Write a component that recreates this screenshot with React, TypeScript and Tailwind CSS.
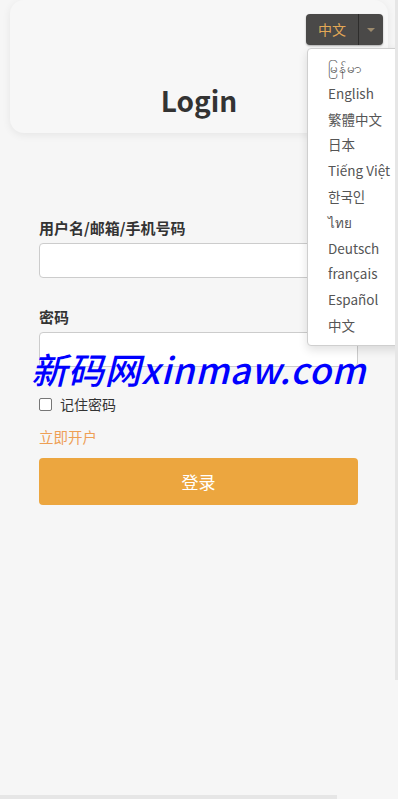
import React from 'react';

const languages = [
  'မြန်မာ',
  'English',
  '繁體中文',
  '日本',
  'Tiếng Việt',
  '한국인',
  'ไทย',
  'Deutsch',
  'français',
  'Español',
  '中文',
];

const font = {
  fontFamily:
    '"Noto Sans CJK SC", "Noto Sans", "Noto Sans CJK KR", "Noto Sans CJK JP", sans-serif',
};

export default function App() {
  return (
    <div className="relative min-h-screen w-full overflow-hidden bg-[#f6f6f6]" style={font}>
      {/* header card */}
      <div className="mx-[10px] flex h-[133px] flex-col rounded-[14px] bg-[#f7f7f7] shadow-[0_2px_8px_rgba(0,0,0,0.07)]">
        <div className="flex justify-end pr-[5px] pt-[14px]">
          <div className="flex h-[31px] overflow-hidden rounded-[4px] bg-[#4a4948] shadow-[0_1px_2px_rgba(0,0,0,0.3)]">
            <button className="w-[52px] text-[14px] text-[#e3a856]">中文</button>
            <div className="w-px bg-[#2e2d2c]" />
            <button className="flex w-[24px] items-center justify-center">
              <span className="block h-0 w-0 border-x-[4px] border-t-[4px] border-x-transparent border-t-[#9c8a6c]" />
            </button>
          </div>
        </div>
        <h1 className="mt-auto pb-[16px] text-center text-[28px] font-bold leading-[34px] text-[#333]">
          Login
        </h1>
      </div>

      {/* language menu */}
      <ul className="absolute left-[307px] top-[48px] w-[110px] rounded-[4px] border border-[#cfcfcf] bg-white py-[6px] shadow-[0_4px_10px_rgba(0,0,0,0.12)]">
        {languages.map((l) => (
          <li key={l} className="pl-[20px] text-[13.5px] leading-[25.8px] text-[#555]">
            {l}
          </li>
        ))}
      </ul>

      {/* form */}
      <div className="px-[39px] pt-[85px]">
        <label className="block text-[15px] font-bold leading-[20px] text-[#333]">用户名/邮箱/手机号码</label>
        <input className="mt-[5px] block h-[35px] w-[319px] rounded-[4px] border border-[#ccc] bg-white px-3 outline-none" />

        <label className="mt-[29px] block text-[15px] font-bold leading-[20px] text-[#333]">密码</label>
        <input
          type="password"
          className="mt-[5px] block h-[35px] w-[319px] rounded-[4px] border border-[#ccc] bg-white px-3 outline-none"
        />

        <div className="mt-[27px] flex items-center gap-[8px]">
          <span className="block h-[13px] w-[13px] rounded-[2px] border border-[#767676] bg-white" />
          <span className="text-[14px] leading-[20px] text-[#333]">记住密码</span>
        </div>

        <a className="mt-[13px] block text-[14.5px] leading-[20px] text-[#ee9f55]">立即开户</a>

        <button className="mt-[11px] h-[47px] w-[319px] rounded-[4px] bg-[#eca63f] text-[17px] text-white">
          登录
        </button>
      </div>

      {/* watermark */}
      <div className="pointer-events-none absolute left-[31px] top-[345px] text-[36px] font-medium italic leading-[46px] tracking-[0.7px] text-[#0000ff]">
        新码网xinmaw.com
      </div>

      {/* scrollbar traces */}
      <div className="absolute right-0 top-0 h-[680px] w-[3px] bg-[#e6e6e6]" />
      <div className="absolute bottom-0 left-0 h-[4px] w-[337px] bg-[#e6e6e6]" />
    </div>
  );
}
